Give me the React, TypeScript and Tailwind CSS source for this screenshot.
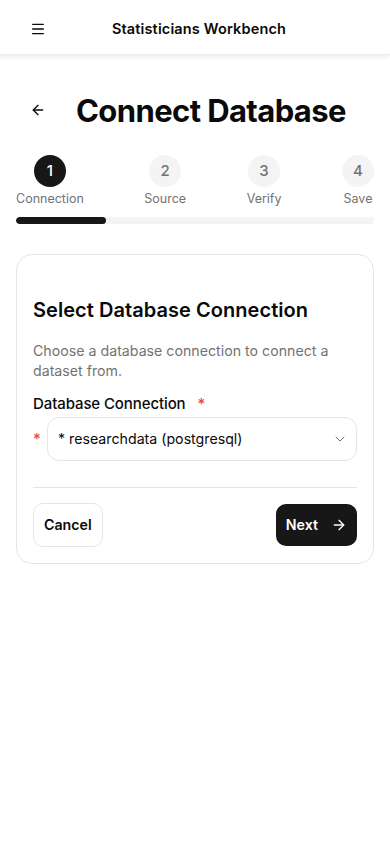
import { ArrowLeft, ArrowRight, ChevronDown, Menu } from "lucide-react";

const steps = [
  { n: 1, label: "Connection" },
  { n: 2, label: "Source" },
  { n: 3, label: "Verify" },
  { n: 4, label: "Save" },
];

export default function App() {
  return (
    <div className="min-h-screen bg-white text-[#0a0a0a]" style={{ fontFamily: "Inter, 'Noto Sans', sans-serif" }}>
      <header className="h-[55px] flex items-center pt-[3px] px-6 shadow-[0_2px_4px_rgba(0,0,0,0.08)] border-b border-[#ececec]">
        <Menu className="w-4 h-4 ml-[6px]" strokeWidth={2} />
        <div className="flex-1 text-center text-[14.5px] font-semibold tracking-[0.15px] pr-[14px]">Statisticians Workbench</div>
      </header>

      <div className="px-4">
        <div className="flex items-center mt-[36px] h-[38px]">
          <button className="w-[44px] h-[36px] flex items-center justify-center">
            <ArrowLeft className="w-4 h-4" strokeWidth={2} />
          </button>
          <h1 className="ml-[16px] text-[31px] font-bold tracking-[-0.6px] leading-none">Connect Database</h1>
        </div>

        <div className="mt-[26px] flex justify-between">
          {steps.map((s) => (
            <div key={s.n} className="flex flex-col items-center">
              <div
                className={
                  s.n === 1
                    ? "w-8 h-8 rounded-full bg-[#171717] text-white flex items-center justify-center text-[15px] font-medium"
                    : "w-8 h-8 rounded-full bg-[#f4f4f5] text-[#737373] flex items-center justify-center text-[15px] font-medium"
                }
              >
                {s.n}
              </div>
              <div className="mt-[3px] text-[12.5px] text-[#737373] leading-[18px]">{s.label}</div>
            </div>
          ))}
        </div>
        <div className="mt-[9px] h-[7px] rounded-full bg-[#f4f4f5] overflow-hidden">
          <div className="h-full w-1/4 bg-[#171717] rounded-full" />
        </div>

        <div className="mt-[30px] border border-[#e5e5e5] rounded-2xl px-4 pt-[41px] pb-4">
          <h2 className="text-[20px] font-semibold leading-[28px] tracking-[0.05px]">Select Database Connection</h2>
          <p className="mt-[17px] text-[14.2px] leading-[20px] text-[#737373]">
            Choose a database connection to connect a dataset from.
          </p>
          <div className="mt-[13px] text-[15px] font-medium leading-[20px] tracking-[-0.1px]">
            Database Connection <span className="text-[#ef4444] ml-2">*</span>
          </div>
          <div className="mt-[3px] flex items-center">
            <span className="text-[#ef4444] text-[15px] w-[14px] font-medium">*</span>
            <div className="flex-1 h-[44px] border border-[#e5e5e5] rounded-xl flex items-center px-[10px]">
              <span className="flex-1 text-[14.2px]">* researchdata (postgresql)</span>
              <ChevronDown className="w-4 h-4 text-[#737373] mr-[-2px]" strokeWidth={1.5} />
            </div>
          </div>
          <div className="mt-[26px] h-px bg-[#e5e5e5]" />
          <div className="mt-[15px] flex justify-between items-center">
            <button className="h-[44px] px-[10px] border border-[#e5e5e5] rounded-[10px] text-[14.2px] font-semibold">Cancel</button>
            <button className="h-[42px] px-[10px] bg-[#171717] text-white rounded-[10px] text-[14.2px] font-semibold flex items-center gap-[13px]">
              Next
              <ArrowRight className="w-4 h-4" strokeWidth={2} />
            </button>
          </div>
        </div>
      </div>
    </div>
  );
}
